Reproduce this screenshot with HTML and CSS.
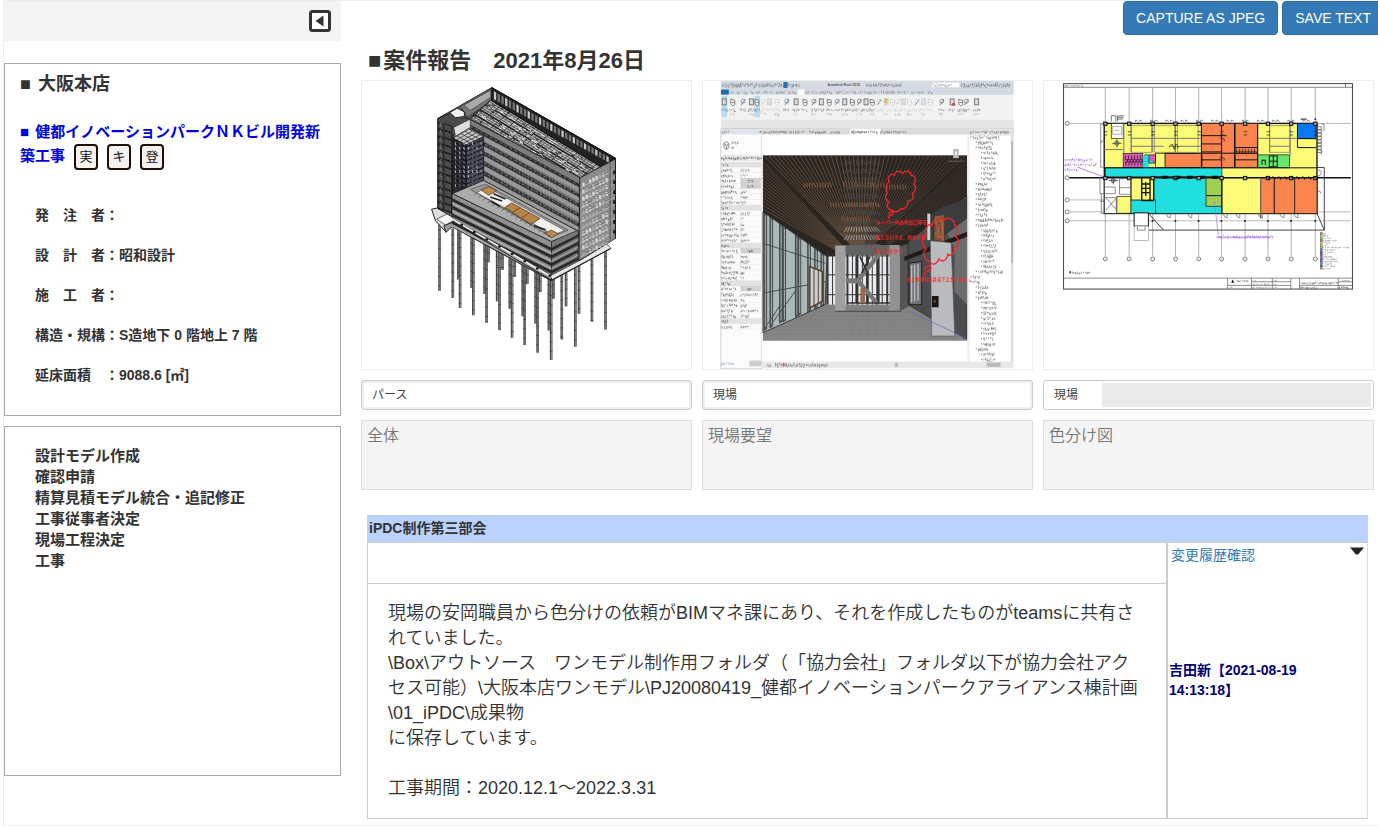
FILE: index.html
```html
<!DOCTYPE html>
<html lang="ja">
<head>
<meta charset="utf-8">
<title>案件報告</title>
<link rel="stylesheet" href="styles.css">
</head>
<body>
<div class="page">
  <aside class="sidebar">
    <div class="sidebar-bar">
      <button class="collapse" type="button" aria-label="閉じる">
        <svg viewBox="0 0 22 22" width="22" height="22"><rect x="1.5" y="1.5" width="19" height="19" rx="2" fill="#fff" stroke="#333" stroke-width="3"/><path d="M14.5 5.5v11L6.500 11z" fill="#333"/></svg>
      </button>
    </div>
    <section class="panel project">
      <h2 class="branch"><span class="mark">■</span> 大阪本店</h2>
      <div class="project-title"><a href="#"><span class="mark">■</span> 健都イノベーションパークＮＫビル開発新<br>築工事</a><span class="badges"><button type="button">実</button><button type="button">キ</button><button type="button">登</button></span></div>
      <ul class="facts">
        <li>発　注　者：</li>
        <li>設　計　者：昭和設計</li>
        <li>施　工　者：</li>
        <li>構造・規構：S造地下 0 階地上 7 階</li>
        <li>延床面積　：9088.6 [㎡]</li>
      </ul>
    </section>
    <section class="panel steps">
      <ul>
        <li>設計モデル作成</li>
        <li>確認申請</li>
        <li>精算見積モデル統合・追記修正</li>
        <li>工事従事者決定</li>
        <li>現場工程決定</li>
        <li>工事</li>
      </ul>
    </section>
  </aside>
  <main class="main">
    <div class="toolbar">
      <button class="btn" type="button">CAPTURE AS JPEG</button>
      <button class="btn" type="button">SAVE TEXT</button>
    </div>
    <h1 class="title"><span class="mark">■</span>案件報告　2021年8月26日</h1>
    <div class="cards">
      <article class="card">
        <div class="picture"><svg id="model" viewBox="3 15 993 870" role="img" aria-label="全体パース"></svg></div>
        <div class="field"><input type="text" value="パース" aria-label="種別 1"></div>
        <textarea class="note" aria-label="説明 1">全体</textarea>
      </article>
      <article class="card">
        <div class="picture"><svg id="interior" viewBox="6 15 993 870" role="img" aria-label="現場要望"></svg></div>
        <div class="field"><input type="text" value="現場" aria-label="種別 2"></div>
        <textarea class="note" aria-label="説明 2">現場要望</textarea>
      </article>
      <article class="card">
        <div class="picture"><svg id="plan" viewBox="9 15 993 870" role="img" aria-label="色分け図"></svg></div>
        <div class="field field-short"><input type="text" value="現場" aria-label="種別 3"><span class="filler"></span></div>
        <textarea class="note" aria-label="説明 3">色分け図</textarea>
      </article>
    </div>
    <section class="report">
      <h3 class="report-head">iPDC制作第三部会</h3>
      <div class="report-grid">
        <div class="report-left">
          <div class="report-subject"></div>
          <div class="report-body">
            <p>現場の安岡職員から色分けの依頼がBIMマネ課にあり、それを作成したものがteamsに共有されていました。<br>\Box\アウトソース　ワンモデル制作用フォルダ（「協力会社」フォルダ以下が協力会社アクセス可能）\大阪本店ワンモデル\PJ20080419_健都イノベーションパークアライアンス棟計画\01_iPDC\成果物<br>に保存しています。</p>
            <p>工事期間：2020.12.1～2022.3.31</p>
          </div>
        </div>
        <div class="report-right">
          <div class="history"><a href="#">変更履歴確認</a>
            <button class="caret" type="button" aria-label="開く"><svg viewBox="0 0 14 8" width="14" height="8"><path d="M0 .5h14L8 7.500H6z" fill="#222"/></svg></button>
          </div>
          <p class="author">吉田新【2021-08-19 14:13:18】</p>
        </div>
      </div>
    </section>
  </main>
</div>
<script src="drawings.js"></script>
</body>
</html>
```
FILE: styles.css
```css
* { box-sizing: border-box; }
body {
  margin: 0;
  background: #fff;
  color: #333;
  font-family: "Liberation Sans", "Noto Sans CJK JP", sans-serif;
  font-size: 14px;
  line-height: 20px;
  text-spacing-trim: space-all;
  overflow-x: hidden;
}
h1, h2, h3, p, ul { margin: 0; padding: 0; }
ul { list-style: none; }
button, input, textarea { font-family: inherit; color: inherit; margin: 0; }
button { cursor: pointer; }

.page {
  display: flex;
  margin-left: 3px;
  border: solid #eee;
  border-width: 1px 0 1px 1px;
}
.mark { margin-right: 2px; }

.sidebar { flex: 0 0 337px; }
.sidebar-bar {
  display: flex;
  justify-content: flex-end;
  align-items: center;
  height: 40px;
  padding-right: 10px;
  margin-bottom: 22px;
  background: #f4f4f4;
}
.collapse { display: flex; padding: 0; border: 0; background: none; }
.panel { border: 1px solid #aaa; font-weight: bold; }
.project { margin-bottom: 10px; padding: 8px 15px 20px; }
.branch { font-size: 18px; line-height: 24px; margin-bottom: 24px; }
.project-title { font-size: 15px; line-height: 24px; margin-bottom: 25px; color: #0000e0; }
.project-title a { color: inherit; text-decoration: none; }
.badges { display: inline-flex; gap: 9px; margin-left: 9px; vertical-align: middle; }
.badges button {
  width: 24px;
  height: 26px;
  padding: 0;
  border: 2px solid #1c1008;
  border-radius: 4px;
  background: #f5f3f1;
  color: #111;
  font-size: 13px;
  line-height: 20px;
}
.facts { padding-left: 15px; line-height: 40px; }
.steps { min-height: 350px; padding: 18px 30px; font-size: 15px; line-height: 21px; }

.main { flex: 1; min-width: 0; padding: 0 4px 6px 20px; }
.toolbar { display: flex; justify-content: flex-end; gap: 4px; margin-right: -10px; }
.btn {
  height: 34px;
  padding: 6px 12px;
  border: 1px solid #2e6da4;
  border-radius: 4px;
  background: #337ab7;
  color: #fff;
  font-size: 14px;
  line-height: 20px;
  white-space: nowrap;
}
.title { margin: 10px 0 3px 7px; font-size: 22px; line-height: 32px; }

.cards { display: grid; grid-template-columns: repeat(3, 1fr); gap: 10px; }
.card { display: flex; flex-direction: column; gap: 10px; min-width: 0; }
.picture { border: 1px solid #eee; }
.picture svg { display: block; width: 100%; height: auto; }
.field {
  display: flex;
  height: 30px;
  padding: 2px;
  border: 1px solid #ccc;
  border-radius: 3px;
  background: #eee;
}
.field input {
  flex: 1;
  min-width: 0;
  padding: 0 8px 3px;
  border: 0;
  background: #fff;
  color: #444;
  font-size: 12px;
}
.field-short { background: #fff; }
.field-short input { flex: 0 0 56px; }
.filler { flex: 1; background: #eaeaea; }
.note {
  display: block;
  width: 100%;
  height: 70px;
  padding: 3px 5px;
  border: 1px solid #ddd;
  background: #f4f4f4;
  color: #777;
  font-size: 16px;
  line-height: 24px;
  font-weight: 350;
  resize: none;
}

.report { margin: 25px 6px 0; }
.report-head { padding: 3px 2px; background: #b9d2ff; font-size: 14px; line-height: 21px; }
.report-grid { display: grid; grid-template-columns: 1fr 199px; border: 1px solid #ccc; border-right-color: #ddd; }
.report-left { border-right: 2px solid #ccc; }
.report-subject { height: 41px; border-bottom: 1px solid #ccc; }
.report-body { padding: 17px 20px 17px; font-size: 18px; line-height: 25px; font-weight: 350; }
.report-body p + p { margin-top: 25px; }
.report-right { display: flex; flex-direction: column; }
.history { display: flex; justify-content: space-between; align-items: flex-start; padding: 2px 3px 0; }
.history a { color: #337ab7; text-decoration: none; }
.caret { display: flex; padding: 2px 0; border: 0; background: none; }
.author { margin: auto 0; padding: 0 60px 23px 1px; color: #000073; font-weight: bold; }
```
FILE: drawings.js
```js
const NS = 'http://www.w3.org/2000/svg';
let seed = 7;
const rnd = () => (seed = (seed * 16807) % 2147483647) / 2147483647;

function pen(id) {
  const svg = document.getElementById(id);
  const add = (tag, attrs) => {
    const e = document.createElementNS(NS, tag);
    for (const k in attrs) e.setAttribute(k, attrs[k]);
    svg.appendChild(e);
    return e;
  };
  return {
    path: (d, fill = 'none', stroke = 'none', w = 2) => add('path', { d, fill, stroke, 'stroke-width': w }),
    poly: (points, fill = 'none', stroke = 'none', w = 2) => add('polygon', { points, fill, stroke, 'stroke-width': w }),
    line: (x1, y1, x2, y2, stroke = '#222', w = 2) => add('line', { x1, y1, x2, y2, stroke, 'stroke-width': w }),
    rect: (x, y, width, height, fill = 'none', stroke = 'none', w = 2) => add('rect', { x, y, width, height, fill, stroke, 'stroke-width': w }),
    circle: (cx, cy, r, stroke = '#444') => add('circle', { cx, cy, r, fill: '#fff', stroke, 'stroke-width': 2 }),
    text: (x, y, s, fill, size) => { add('text', { x, y, fill, 'font-size': size, 'font-weight': 'bold' }).textContent = s; },
    // a row of short ticks standing for lettering too small to read
    scrawl: (x, y, w, h = 9, c = '#777') => {
      let d = '';
      for (let i = 0; i < w; i += 4 + rnd() * 3) {
        d += `M${x + i} ${y - rnd() * h / 2}v${h * (0.4 + rnd() * 0.6)}`;
        if (rnd() > 0.4) d += `M${x + i} ${y + rnd() * h * 0.7}h4`;
      }
      add('path', { d, stroke: c, 'stroke-width': 1.6, fill: 'none' });
    }
  };
}

/* Isometric building model */
function drawModel() {
  const p = pen('model');
  const mix = (a, b, t) => [a[0] + (b[0] - a[0]) * t, a[1] + (b[1] - a[1]) * t];
  const at = (a, b, c, u, v) => [a[0] + (b[0] - a[0]) * u + (c[0] - a[0]) * v, a[1] + (b[1] - a[1]) * u + (c[1] - a[1]) * v];
  const seg = (a, b, c, w) => p.line(a[0], a[1], b[0], b[1], c, w);
  [[237,445,648],[277,460,670],[294,460,614],[299,470,700],[334,485,640],[339,490,722],[373,505,658],[379,510,745],[385,515,562],[411,525,680],[418,530,767],[427,530,585],[449,550,702],[456,555,790],[464,555,606],[488,570,725],[494,575,812],[502,580,628],[527,590,747],[533,595,835],[541,600,652],[567,610,768],[574,615,857],[581,610,672],[606,600,795],[619,595,695],[647,580,817],[658,570,718],[697,550,741],[738,525,765]].forEach(([x, a, b]) => {
    p.line(x, a, x, b, '#4a4a4a', 8);
    p.line(x + 1, a, x + 1, b, '#8a8a8a', 3);
    for (let y = a + 20; y < b; y += 28) p.line(x - 4, y, x + 4, y, '#333', 2);
  });
  p.poly('213,402 232,398 290,430 575,595 740,505 754,520 575,618 270,450 255,470 225,437', '#dedede', '#222', 3);
  p.poly('228,432 262,415 288,430 256,450', '#f4f4f4', '#222', 2);
  p.poly('250,452 290,436 575,605 575,618 275,455 256,472', '#999', '#222', 3);
  // roof
  p.poly('232,128 395,35 768,248 768,490 655,558 572,600 275,425 232,400', '#666', '#222', 3);
  p.poly('300,90 395,35 395,75 320,125', '#777', '#222', 2);
  p.poly('310,88 392,42 392,64 330,104', '#aaa', '#333', 2);
  p.poly('392,72 728,272 662,308 330,130', '#bcbcbc', '#222', 3);
  const a = [392, 72], b = [722, 270], c = [330, 125];
  for (let i = 0; i <= 11; i++) seg(at(a, b, c, 0, i / 11), at(a, b, c, 0.99, i / 11), '#222', i % 3 ? 2 : 5);
  for (let i = 0; i <= 34; i++) seg(at(a, b, c, i / 34, 0), at(a, b, c, i / 34, 1), '#333', i % 3 ? 1.5 : 3);
  for (let i = 0; i < 120; i++) {
    const q = at(a, b, c, rnd() * 0.95, rnd() * 0.95);
    p.line(q[0], q[1], q[0] + 9, q[1] + 5, rnd() > 0.4 ? '#eee' : '#222', 3);
  }
  // parapet
  p.poly('395,35 768,248 725,275 395,75', '#222', '#111', 3);
  for (let i = 0; i < 31; i++) {
    const q = mix([401, 46], [752, 247], i / 31);
    const h = 24 - i * 0.25;
    p.poly(`${q[0]},${q[1]} ${q[0] + 7},${q[1] + 4} ${q[0] + 7},${q[1] + h + 4} ${q[0]},${q[1] + h}`, i % 3 ? '#777' : '#c8c8c8');
  }
  // long facade
  p.poly('330,132 660,306 660,470 640,465 370,320 330,220', '#7c7c7c', '#222', 2);
  for (let i = 0; i < 7; i++) {
    const y = 142 + i * 30, x = i < 2 ? 330 : 370, y0 = y + (x - 330) * 0.5;
    p.poly(`${x},${y0 + 5} 658,${y + 183} 658,${y + 194} ${x},${y0 + 18}`, '#2c2c2c');
    p.poly(`${x},${y0 + 18} 658,${y + 194} 658,${y + 207} ${x},${y0 + 33}`, '#989898', '#555', 1);
    for (let j = 0; j < 22; j++) {
      const q = mix([x, y0 + 10], [656, y + 186], j / 22);
      p.line(q[0], q[1], q[0] + 7, q[1] + 4, '#777', 3);
    }
  }
  for (let x = 380; x < 655; x += 9) p.line(x, 170 + (x - 345) * 0.52, x, 318 + (x - 370) * 0.5, '#aaa', 0.6);
  // left wing
  p.poly('232,128 275,110 330,130 278,180 275,415 232,398', '#4b4b4b', '#1a1a1a', 3);
  for (let y = 140; y < 400; y += 22) {
    p.path(`M232 ${y}l18 7v18l-18-7M252 ${y + 3}l22 8v20l-22-8`, 'none', '#1a1a1a', 3);
    p.line(241, y, 241, y + 14, '#777', 3);
  }
  p.poly('268,110 290,97 312,108 312,122 285,126', '#f0f0f0', '#222', 3);
  p.poly('280,155 330,130 330,155 285,182', '#ddd', '#333', 2);
  p.poly('278,188 325,160 370,183 318,208', '#c8c8c8', '#222', 2);
  for (let i = 1; i < 4; i++) { p.line(278 + i * 12, 188 - i * 7, 318 + i * 13, 208 - i * 6); p.line(278 + i * 10, 188 + i * 5, 325 + i * 11, 160 + i * 6); }
  p.poly('278,188 318,208 318,345 278,358', '#292a33', '#111', 2);
  p.poly('318,208 370,183 370,318 318,345', '#474957', '#111', 2);
  for (let y = 200; y < 340; y += 14) {
    p.path(`M278 ${y}l40 14l52 -22`, 'none', '#111', 3);
    for (let x = 284; x < 366; x += 13) p.line(x, y, x + 2, y + 9, rnd() > 0.6 ? '#b4b6c4' : '#606274', 3);
  }
  // podium
  p.poly('275,355 370,315 655,468 575,500', '#adadad', '#222', 3);
  p.poly('330,342 375,326 625,465 575,486', '#999', '#444', 2);
  p.poly('350,352 378,334 614,466 582,480', '#f2f0ed', '#555', 2);
  p.poly('362,344 385,334 410,346 385,360', '#c08a4c', '#333', 2);
  p.poly('434,397 455,383 540,430 513,448', '#b98346', '#222', 2);
  p.path('M458 410l23-13M486 427l23-14', 'none', '#765026', 3);
  p.poly('556,476 574,465 596,476 576,488', '#c08a4c', '#333', 2);
  p.path('M390 365l36 12M392 378l28 16M522 452l35 12M400 355l36 16', 'none', '#222', 5);
  for (let x = 340; x < 570; x += 14) p.line(x, 360 + (x - 340) * 0.56, x + 9, 353 + (x - 340) * 0.56, '#444', 2);
  p.poly('275,355 575,500 575,602 275,428', '#909090', '#222', 2);
  p.poly('575,500 655,465 655,560 575,602', '#777', '#222', 2);
  for (let i = 0; i < 4; i++) {
    const y = 368 + i * 23;
    p.poly(`275,${y} 575,${y + 150} 655,${y + 110} 655,${y + 118} 575,${y + 160} 275,${y + 10}`, '#2a2a2a');
    p.path(`M275 ${y + 16}l300 152l80-42`, 'none', '#ccc', 2);
  }
  p.path('M275 432L575 606L750 515', 'none', '#eee', 5);
  p.path('M275 440L575 616L752 522', 'none', '#222', 3);
  for (let i = 0; i < 8; i++) p.rect(300 + i * 38, 446 + i * 22, 8, 6, '#111');
  // end facade
  p.poly('660,308 768,250 768,490 658,558', '#8b8b8b', '#222', 3);
  for (let r = 0; r < 11; r++) {
    const y = 322 + r * 21;
    for (let k = 0; k < 8; k++) {
      const x = 668 + k * 10, yy = y - k * 5;
      p.rect(x, yy, 7, 12, rnd() > 0.5 ? '#dadada' : '#a6a6a6');
      if (rnd() > 0.5) p.line(x, yy + 6, x + 9, yy + 2, '#444', 2);
    }
    p.line(662, y + 15, 766, y - 40, '#bbb', 2);
  }
  p.line(752, 262, 752, 500, '#444', 2);
  for (let y = 285; y < 480; y += 30) p.rect(761, y, 7, 11, '#1a1a1a');
}

/* BIM application window with an interior view */
function drawInterior() {
  const p = pen('interior');
  p.rect(60, 15, 884, 868, '#fff');
  p.rect(60, 15, 884, 42, '#d4dae2');
  p.rect(60, 57, 884, 102, '#f2f2f2');
  p.rect(60, 132, 884, 28, '#e6e6e6');
  p.rect(60, 158, 884, 18, '#cfcfcf');
  p.scrawl(66, 26, 230, 12, '#566');
  p.rect(249, 18, 12, 18, '#2d6fae');
  p.text(382, 30, 'Autodesk Revit 2019', '#555', 10);
  p.scrawl(500, 26, 110, 9, '#555');
  p.rect(698, 20, 82, 14, '#fff');
  p.scrawl(702, 27, 55); p.scrawl(785, 26, 150, 12, '#455');
  p.rect(60, 41, 24, 15, '#1f6bb0');
  [[90,10],[110,10],[130,10],[150,10],[168,10],[188,10],[208,10],[228,30],[265,22],[318,10],[336,14],[360,40],[410,58],[476,54],[540,44],[594,34],[636,12],[655,22],[686,10]].forEach(([x, w]) => p.scrawl(x, 48, w, 8));
  p.rect(292, 40, 20, 18, '#fafafa');
  p.rect(62, 60, 17, 64, '#b8daf4'); p.rect(161, 60, 17, 64, '#b8daf4');
  const icons = [70,96,127,152,169,188,207,230,259,287,314,341,363,387,411,434,457,478,498,517,538,559,578,594,611,630,652,672,692,727,758,784,801,832];
  icons.forEach((x, i) => {
    const pale = (i > 4 && i < 8) || (i > 19 && i < 29);
    const c = pale ? '#ccc' : '#666';
    if (i % 3 === 0) p.rect(x - 6, 69, 12, 18, '#ddd', c, 2.5);
    else if (i % 3 === 1) p.path(`M${x - 6} 70l12 4v12l-6 4l-6-6zM${x - 4} 80h9`, '#fff', c, 2.5);
    else { p.circle(x, 76, 6, c); p.line(x - 6, 88, x + 6, 70, i % 2 ? c : '#4a83b5', 2.5); }
    p.scrawl(x - 9, 101, 18, 9, pale ? '#ccc' : '#777');
    if (i % 2) p.scrawl(x - 7, 114, 13, 8, '#aaa');
  });
  p.rect(554, 68, 8, 14, '#e0b84a'); p.rect(758, 82, 9, 7, '#d33');
  // left properties panel
  p.rect(60, 160, 124, 724, '#fbfbfb', '#bbb', 2);
  p.rect(60, 160, 124, 16, '#dce3ec'); p.scrawl(64, 167, 22); p.text(176, 171, '×', '#333', 12);
  p.path('M69 204l8-6l7 6v12l-7 6l-8-6zM69 204l8 5l7-5M77 209v12', '#eee', '#666', 2);
  p.scrawl(93, 201, 18); p.scrawl(93, 214, 10);
  p.rect(60, 238, 124, 18, '#e8e8e8'); p.scrawl(62, 247, 120, 9, '#444');
  for (let i = 0; i < 31; i++) {
    const y = 267 + i * 16.300;
    const head = [0, 8, 15, 22, 29].includes(i);
    if (head) p.rect(60, y - 8, 122, 16, '#e2e2e2');
    p.line(60, y + 8, 182, y + 8, '#ddd', 1);
    p.scrawl(63, y, head ? 22 : 26 + rnd() * 26, 9, '#444');
    if (!head) {
      if ([3, 4, 16, 23].includes(i)) { p.rect(121, y - 7, 58, 13, '#d3d3d3', '#aaa', 1); p.scrawl(142, y, 13, 7, '#333'); }
      else p.scrawl(121, y, i === 24 || i === 27 ? 50 : 8 + rnd() * 22, 9, '#555');
    }
  }
  p.line(119, 274, 119, 780, '#ddd', 1);
  p.scrawl(62, 868, 34, 8, '#4b8bc8'); p.rect(146, 859, 36, 17, '#ccc');
  // view tabs
  p.rect(185, 159, 625, 18, '#dcdcdc');
  [[190,68],[268,46],[328,52],[392,28],[542,80]].forEach(([x, w]) => p.scrawl(x, 168, w, 8, '#555'));
  p.rect(450, 159, 91, 18, '#fff'); p.scrawl(455, 168, 80, 8, '#222');
  p.rect(185, 177, 620, 706, '#fff');
  // room
  p.rect(187, 240, 616, 558, '#777');
  p.poly('187,770 380,684 625,684 803,792 803,798 187,798', '#858585');
  for (let i = 0; i < 22; i++) p.line(395 + i * 10, 684, 187 + i * 29, 798, '#777', 1);
  for (let i = 0; i < 9; i++) p.line(370 - i * 22, 690 + i * 11, 630 + i * 18, 690 + i * 11, '#777', 1);
  p.poly('187,240 803,240 803,370 628,520 500,505 400,545 380,545 187,410', '#2a2521');
  for (let i = 0; i < 46; i++) {
    const x = 190 + i * 13.500;
    p.line(x, 240, 452 + i * 1.5, 510, i < 28 ? '#6c5442' : '#51433a', 2.5);
  }
  for (let i = 0; i < 14; i++) p.line(187, 258 + i * 11, 425, 510 + i * 2, '#624c3c', 2.5);
  for (let i = 0; i < 10; i++) p.line(803, 255 + i * 11, 560, 480 + i * 4, '#463932', 2.5);
  for (let r = 0; r < 10; r++) {
    const y = 255 + r * 25;
    for (let k = 0; k < 13; k++) p.line(442 + k * 7, y, 445 + k * 7 + (k - 6) * 2, y + 15, r > 7 ? '#aaa' : '#515151', 2.5);
  }
  [[310,322,85],[430,320,90],[510,322,48],[560,328,60],[390,382,150],[425,425,85]].forEach(([x, y, w]) => {
    for (let i = 0; i < w; i += 8) p.line(x + i, y, x + i + 3, y + 14, '#80583c', 3);
  });
  // glazing
  p.poly('187,410 380,545 375,690 187,775', '#a9b9b7', '#333', 3);
  for (const [x, t, b] of [[190,412,768],[208,425,760],[237,445,745],[247,452,742],[285,478,727],[293,484,722],[322,502,712],[343,518,702],[362,532,695]]) {
    p.poly(`${x},${t} ${x + 8},${t + 6} ${x + 8},${b - 4} ${x},${b}`, '#666c70', '#222', 2);
    p.line(x + 5, t + 10, x + 5, b - 8, '#c5cac9', 2);
  }
  p.path('M187 655L380 620M187 505L375 565M190 765L240 690M208 755l80-110', 'none', '#454b4e', 3);
  p.poly('328,575 366,590 366,680 328,700', '#c9cfd0', '#58422e', 5);
  p.path('M341 580v115M354 585v100', 'none', '#58422e', 3);
  // far end
  p.rect(380, 545, 230, 145, '#e8eaeb');
  for (let x = 382; x < 600; x += 15) p.line(x, 535, x, 690, '#35383b', x % 2 ? 3 : 6);
  p.path('M380 600h220M380 660h220', 'none', '#333', 3);
  p.rect(405, 510, 165, 30, '#626262');
  p.rect(405, 512, 31, 198, '#a0a0a0');
  p.rect(569, 510, 31, 200, '#929292'); p.poly('600,515 628,505 628,695 600,710', '#555');
  p.path('M470 545v140M502 545v140M535 545v140', 'none', '#333', 8);
  p.path('M540 535L473 618L535 690', 'none', '#777', 13);
  p.path('M437 618h43', 'none', '#777', 15);
  p.path('M480 545l25 55M510 545l-25 50M440 685h130', 'none', '#333', 5);
  p.rect(481, 640, 14, 45, '#956c51');
  p.path('M405 710h200', 'none', '#444', 3);
  // right wall
  p.poly('625,500 803,360 803,795 760,770 625,690', '#4b4c4e', '#222', 2);
  p.poly('725,440 803,372 803,690 765,650 765,520', '#6d6d70');
  p.poly('690,420 730,395 803,370 803,430 690,515', '#3b3c3e');
  p.poly('614,545 803,470 803,485 614,558', '#211a18');
  p.poly('628,565 666,560 666,690 628,690', '#707376', '#222', 3);
  p.path('M636 572v110M645 570v110M655 568v110', 'none', '#d2d5d6', 3);
  p.rect(683, 415, 9, 80, '#d0d0d0');
  p.poly('704,423 735,418 735,500 704,496', '#93573a', '#433', 2);
  for (let y = 427; y < 492; y += 8) for (let x = 707; x < 734; x += 7) p.line(x, y, x + 3, y + 2, rnd() > 0.5 ? '#c88760' : '#5b3427', 3);
  p.poly('692,497 755,503 766,785 696,785', '#b9bbbe', '#555', 2);
  p.rect(697, 664, 20, 34, '#181414'); p.rect(702, 676, 6, 8, '#80513c');
  p.line(628, 710, 803, 792, '#5865bb', 2);
  // navigation cube
  p.rect(761, 220, 17, 28, '#bbb'); p.rect(766, 228, 7, 10, '#eee'); p.line(745, 257, 795, 257, '#777', 2);
  // revision clouds
  const red = '#f0262b';
  p.path('M577 405C560 402 558 388 568 380C554 375 554 360 563 352C553 338 560 325 568 320C560 306 572 292 583 299C587 284 604 286 609 294C618 281 634 288 634 300C650 300 650 318 642 326C653 337 645 350 638 355C645 371 632 380 624 377C625 398 609 404 602 400C598 412 582 412 577 405Z', 'none', red, 4);
  p.path('M568 415c4-10 14-9 11 0c-2 8-13 8-11 0M565 430l5-7', 'none', red, 4);
  p.path('M690 560C672 550 665 530 680 522C660 505 668 485 680 482C670 464 686 443 698 450C700 430 722 426 731 438C744 420 765 432 765 450C781 458 774 475 767 482C785 495 774 515 764 519C768 537 752 545 745 538C742 562 724 560 718 552C709 573 695 570 690 560Z', 'none', red, 4);
  p.path('M677 582c4-14 20-10 17 0c-4 10-18 8-17 0M676 593l-3 10', 'none', red, 4);
  p.text(528, 446, 'ルーバー内の吹出口等を', red, 14);
  p.text(526, 492, '変えたいです。何か方法', red, 14);
  p.text(526, 535, '有りますか？', red, 14);
  p.text(622, 619, '仕上材質は天井まで上がりません', red, 13);
  // project browser
  p.rect(804, 176, 6, 690, '#eee');
  p.rect(811, 160, 132, 20, '#e4e4e4'); p.scrawl(814, 168, 115, 8, '#555');
  for (let i = 0; i < 44; i++) {
    const y = 184 + i * 15.600;
    const top = [0, 27, 28].includes(i);
    const mid = [1, 2, 9, 10, 11, 12, 13, 14, 15, 16, 17, 26, 29, 30, 31, 41].includes(i);
    const x = top ? 822 : mid ? 838 : 854;
    p.rect(x - 9, y - 2, 4, 4, '#999');
    p.scrawl(x, y, top ? (i ? 18 : 82) : i === 16 || i === 26 ? 76 : 24 + rnd() * 20, 10, '#444');
  }
  p.rect(935, 180, 8, 684, '#ddd'); p.rect(936, 195, 6, 370, '#bbb');
  p.rect(185, 862, 758, 20, '#e8e8e8'); p.rect(585, 865, 9, 13, '#bbb'); p.rect(862, 865, 42, 13, '#bbb');
  p.scrawl(200, 872, 10); p.scrawl(225, 871, 155, 12, '#555');
  p.rect(246, 866, 6, 9, '#d65');
}

/* Colour-coded floor plan */
function drawPlan() {
  const p = pen('plan');
  const Y = '#fbfb77', O = '#fb854f', C = '#22dfdf', G = '#66e66e', K = '#111';
  p.rect(68, 23, 872, 620, '#fff', '#444', 3);
  p.line(68, 34, 940, 34, '#444', 2); p.line(919, 23, 919, 34, '#444');
  p.scrawl(72, 28, 55, 5);
  [[194],[266],[337],[406],[476],[545],[616],[685],[755],[828]].forEach(([x]) => { p.line(x, 34, x, 543, '#888', 2); p.circle(x, 552, 6); p.line(x - 3, 552, x + 3, 552, '#777', 1); });
  [143, 374, 410, 437].forEach(y => { p.line(86, y, y === 374 ? 372 : 935, y, '#999', 2); p.circle(79, y, 6); });
  p.circle(79, 307, 6);
  p.path('M325 465H855V276H833M327 418L370 465M833 415L855 465', 'none', '#444', 3);
  p.rect(191, 143, 642, 272, Y, K, 4);
  // rooms
  [[484,143,102,134,O],[586,143,68,134,O],[374,233,112,44,O],[654,238,96,39,G],[774,143,56,46,'#0878f5'],
   [248,234,59,42,'#df58b4'],[325,238,21,22,'#df58b4'],[346,233,28,44,Y],[194,277,352,28,C],[341,303,205,112,C],
   [270,374,76,41,C],[498,306,48,87,'#a1cf54'],[663,307,103,108,O],[766,307,67,108,O],[546,307,117,108,Y],
   [272,305,68,69,Y],[191,305,80,110,'#fff'],[229,364,42,50,Y],[212,143,36,45,'#fff']].forEach(r => p.rect(...r, K, 2));
  p.rect(307, 243, 18, 50, C);
  p.path('M310 243l8-8l8 8v20h20', C, K, 2);
  for (const y of [180, 205, 229, 253]) { p.line(484, y, 545, y, K, 3); }
  p.path('M545 143V277M584 143V277M584 216H652M584 253H652M546 180H560M654 143V277M373 233H654M484 143V277M774 143V216H830M774 189H830', 'none', K, 3);
  p.path('M272 188H484M654 188H774M272 212H370M390 212H484M690 212H750M190 222H248M250 143V234M272 143V230M337 143V230M406 143V230M690 143V230M752 143V240', 'none', '#777', 3);
  for (let x = 272; x < 480; x += 70) p.rect(x, 150, 62, 80, 'none', '#777', 2);
  p.rect(690, 150, 61, 80, 'none', '#777', 2);
  p.line(191, 277, 833, 277, K, 3); p.line(86, 307, 935, 307, K, 4);
  p.line(663, 307, 663, 430, '#765', 4); p.line(704, 307, 704, 415, K, 3); p.line(546, 307, 546, 415, K, 3);
  p.line(340, 307, 340, 374, K, 3); p.line(498, 361, 546, 361, K, 3);
  for (const x of [194,266,337,406,476,545,616,685,755,828]) {
    for (const y of [143, 307]) p.rect(x - 5, y - 4, 10, 10, '#aaa', K, 3);
    if (x > 300) p.rect(x - 3, 435, 5, 5, K);
    p.line(x - 4, 168, x + 6, 168, K, 2); p.line(x - 4, 178, x + 6, 178, K, 2);
  }
  for (let x = 285; x < 830; x += 46) p.path(`M${x} 138v-5q6 0 8 5M${x + 13} 138v-5q6 0 8 5`, 'none', '#555', 2);
  for (const x of [390, 455, 562, 600, 668, 733, 775]) p.path(`M${x} 416v12q-9 0-12-12`, 'none', '#555', 2);
  for (let x = 255; x < 302; x += 9) p.path(`M${x} 240v12h6v8h-5v10M${x} 257h8`, 'none', '#51284a', 3);
  for (let x = 590; x < 650; x += 9) p.path(`M${x} 220v14h5M${x} 228q8-3 7 7`, 'none', K, 2);
  for (let x = 365; x < 550; x += 38) p.path(`M${x} 303h18M${x} 309h15`, 'none', K, 4);
  for (let x = 680; x < 830; x += 18) p.path(`M${x} 304q7 0 8 9`, 'none', K, 3);
  p.rect(689, 241, 24, 33, G, K, 3); p.path('M689 257h24M701 241v33M667 268v-14h10v14', 'none', K, 3);
  p.path('M304 307v68M329 307v68M304 326h25M304 339h25M304 352h25M316 320v42M303 376h38', 'none', K, 4);
  p.path('M192 335h32v20h-32M237 310h33v47h-33zM237 337h32M194 367h33v43M195 367l32 35M195 405l32-36', 'none', '#555', 2);
  for (const [x, y] of [[229, 203], [218, 315]]) { p.circle(x, y, 6, K); p.path(`M${x - 14} ${y}h28M${x} ${y - 12}v24`, 'none', K, 2); }
  p.path('M216 152h27v24h-27zM222 164h15', 'none', '#888', 2);
  p.path('M212 137v-17h14v17M231 137v-17h20M231 125h18M231 130h16', 'none', '#333', 2);
  p.path('M180 145v130M190 145v130M180 145h12M180 203q4-12 10-7M180 275h10M178 305v50h12M182 355v60h10M178 378h12', 'none', '#555', 2);
  p.rect(281, 413, 43, 40, '#fff', K, 3); p.rect(281, 453, 43, 43, '#fff', '#999', 2); p.path('M291 455v10h23v-10', 'none', '#555', 2);
  for (let y = 153; y < 225; y += 10) p.path(`M833 ${y}h13v8h-13`, 'none', '#444', 2);
  p.path('M846 145h8v22M847 225v13M834 285q12-4 12 8q-2 9-12 10M834 348q12-3 9 7', 'none', '#555', 2);
  p.path('M387 216q2-10 10-10l5 15l5-15q8 0 6 13M538 190q8-10 10 0q8-4 4 8M538 248q8-10 10 0q8-4 4 8', 'none', K, 2);
  p.path('M784 130h18M824 130h7', 'none', K, 3);
  // remarks
  const V = '#9340dc';
  p.scrawl(73, 252, 82, 8, V); p.scrawl(73, 267, 98, 8, V); p.scrawl(73, 282, 36, 8, V);
  p.line(110, 275, 190, 305, V, 2); p.line(523, 378, 535, 480, '#a16ab9', 2);
  p.scrawl(531, 484, 170, 8, V); p.path('M531 488h160', 'none', V, 1.5);
  ['#eb7740','#d8de3e','#6bdc62','#d35ea0','#eadf4f','#e5cf3c','#a5bc44','#377fe5','#3264c7','#5146b2','#b04ac8','#7a3ea5','#357fd2','#36a5ce','#4250b2','#a1c158'].forEach((c, i) => {
    const y = 472 + i * 7;
    p.rect(843, y, 6, 6, c, '#444', 1);
    p.scrawl(852, y + 3, [8,15,25,43,18,13,75,36,36,18,28,46,44,28,35,18][i], 4, '#777');
  });
  p.scrawl(88, 593, 62, 6, '#444'); p.rect(86, 589, 4, 6, K);
  // title block
  p.path('M68 610H940M563 610V643M635 610V643M698 610V643M754 610V643M780 610V643M897 610V643M563 632H635M635 621H754M635 632H754M780 632H940M897 621H940', 'none', '#555', 2);
  p.poly('578,614 574,624 583,624', K);
  p.scrawl(592, 618, 35, 6, '#444'); p.scrawl(639, 617, 12, 4); p.scrawl(639, 628, 50, 4); p.scrawl(639, 638, 50, 4);
  p.scrawl(703, 617, 10, 4); p.scrawl(703, 628, 10, 4); p.scrawl(703, 638, 10, 4); p.scrawl(571, 637, 8, 4);
  p.scrawl(784, 624, 112, 6, '#333'); p.scrawl(784, 638, 54, 5, '#444');
  p.scrawl(910, 617, 17, 4); p.scrawl(901, 637, 24, 7, '#333');
}

drawModel();
drawInterior();
drawPlan();
```
